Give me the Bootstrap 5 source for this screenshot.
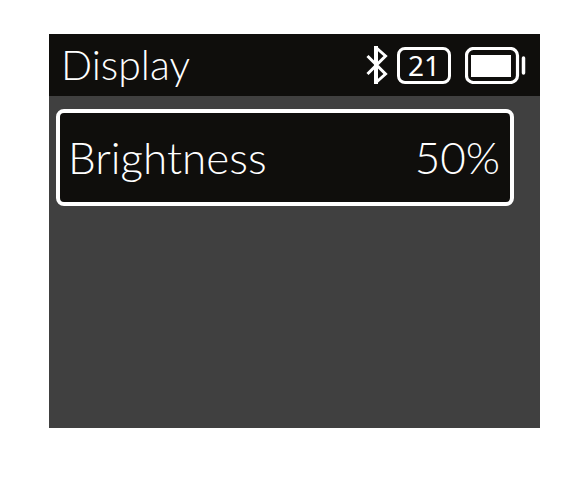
<!DOCTYPE html>
<html lang="en">
<head>
<meta charset="utf-8">
<meta name="viewport" content="width=device-width, initial-scale=1">
<title>Display</title>
<link href="https://cdn.jsdelivr.net/npm/bootstrap@5.3.0/dist/css/bootstrap.min.css" rel="stylesheet">
<style>
  body { background: #fff; font-family: Lato, "Liberation Sans", sans-serif; font-weight: 300; color: #fff; }
  .device-frame { min-height: 100vh; padding: 34px 44px 58px 49px; }
  .screen { background: #404040; }
  .status-bar { background: #0f0e0c; height: 62px; padding: 0 14px 0 12px; }
  .screen-title { font-size: 41px; font-weight: 300; line-height: 62px; }
  .status-icons { gap: 14px; }
  .screen-body { padding: 13px 26px 13px 7px; }
  .setting { background: #0f0e0c; color: #fff; border: 4px solid #fff; border-radius: 8px; padding: 0 10px 0 8px; height: 97px; font-size: 44px; font-weight: 300; line-height: 89px; }
  .counter { width: 54px; height: 37px; border: 3px solid #fff; border-radius: 8px; font-family: "Noto Sans", sans-serif; font-size: 28px; font-weight: 400; line-height: 31px; }
</style>
</head>
<body>
<div class="device-frame d-flex flex-column">
  <main class="screen flex-grow-1 d-flex flex-column">
    <header class="status-bar d-flex align-items-center justify-content-between">
      <h1 class="screen-title m-0">Display</h1>
      <div class="status-icons d-flex align-items-center">
        <div class="d-flex align-items-center gap-2">
          <svg width="23" height="38" viewBox="0 0 23 38" fill="none" stroke="#fff" role="img" aria-label="Bluetooth">
            <path d="M10 0V38" stroke-width="4"/>
            <path d="M1.5 10L19.5 28L10 36.5M1.5 28L19.5 10L10 1.5" stroke-width="3"/>
          </svg>
          <span class="counter d-flex align-items-center justify-content-center">21</span>
        </div>
        <svg width="61" height="37" viewBox="0 0 61 37" role="img" aria-label="Battery full">
          <rect x="1.5" y="1.5" width="51" height="34" rx="7" fill="none" stroke="#fff" stroke-width="3.2"/>
          <rect x="6" y="8" width="40" height="22" fill="#fff"/>
          <path d="M58.5 11V26" stroke="#fff" stroke-width="3.5" stroke-linecap="round"/>
        </svg>
      </div>
    </header>
    <div class="screen-body">
      <button type="button" class="setting w-100 d-flex justify-content-between align-items-center">
        <span>Brightness</span>
        <span>50%</span>
      </button>
    </div>
  </main>
</div>
<script src="https://cdn.jsdelivr.net/npm/bootstrap@5.3.0/dist/js/bootstrap.bundle.min.js"></script>
</body>
</html>
